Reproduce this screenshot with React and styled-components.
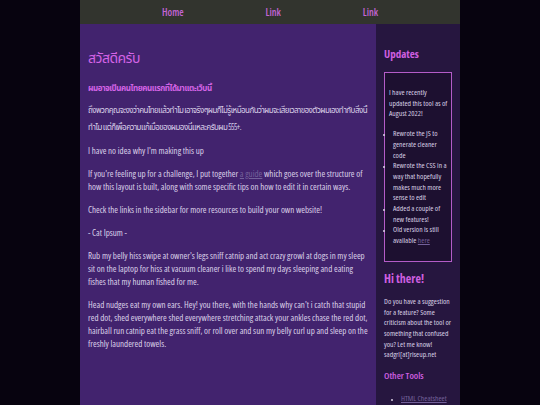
import React from "react";
import styled, { createGlobalStyle } from "styled-components";

const Global = createGlobalStyle`
  html, body { margin: 0; padding: 0; background: #07030f; }
  body { font-family: "Open Sans", "Noto Sans Thai", sans-serif; font-stretch: 75%; }
  * { box-sizing: border-box; }
`;

const Page = styled.div`
  width: 380px;
  margin: 0 auto;
  min-height: 405px;
  display: flex;
  flex-direction: column;
`;

const Header = styled.header`
  height: 24px;
  background: #32342e;
  display: flex;
  justify-content: space-evenly;
  align-items: center;
`;

const NavLink = styled.a`
  color: #c465d6;
  font-size: 10px;
  font-weight: 600;
  text-decoration: none;
`;

const Body = styled.div`
  flex: 1;
  display: grid;
  grid-template-columns: 296px 84px;
`;

const Main = styled.main`
  background: #42236e;
  padding: 25px 8px 0 8px;
  color: #dad0e8;
`;

const H1 = styled.h1`
  margin: 0 0 15px;
  font-size: 14px;
  line-height: 18px;
  letter-spacing: -0.5px;
  font-weight: normal;
  color: #d463e6;
`;

const H2 = styled.h2`
  margin: 0 0 7px;
  font-size: 8px;
  line-height: 12px;
  letter-spacing: -0.4px;
  font-weight: bold;
  color: #d463e6;
`;

const P = styled.p`
  margin: 0 0 10px;
  font-size: 8.98px;
  line-height: 13px;
`;

const ThaiP = styled(P)`
  margin-bottom: 9px;
  font-size: 8px;
  line-height: 17px;
  letter-spacing: -0.55px;
`;

const TextLink = styled.a`
  color: #73609a;
  text-decoration: underline;
`;

const Side = styled.aside`
  background: #26163f;
  padding: 23px 8px 0 8px;
  color: #d8cfe4;
`;

const SideTitle = styled.h3`
  margin: 0 0 ${(p) => p.$mb ?? 10}px;
  font-size: ${(p) => p.$size ?? 11}px;
  line-height: ${(p) => p.$lh ?? 14}px;
  font-weight: ${(p) => p.$weight ?? 700};
  color: #cf5fe0;
`;

const Box = styled.div`
  border: 1px solid #b45cc8;
  background: #1d1030;
  padding: 14px 3px 15px 4px;
  margin-bottom: 9px;
`;

const SideP = styled.p`
  margin: 0 0 ${(p) => p.$mb ?? 9}px;
  font-size: 7.6px;
  line-height: 10.7px;
`;

const List = styled.ul`
  margin: 0;
  padding-left: ${(p) => p.$pl ?? 4}px;
  font-size: 7.6px;
  line-height: 10.7px;

  li::marker {
    font-size: 5px;
  }
`;

export default function App() {
  return (
    <>
      <Global />
      <Page>
        <Header>
          <NavLink href="#">Home</NavLink>
          <NavLink href="#">Link</NavLink>
          <NavLink href="#">Link</NavLink>
        </Header>
        <Body>
          <Main>
            <H1>สวัสดีครับ</H1>
            <H2>ผมอาจเป็นคนไทยคนแรกที่ได้มาเเตะเว็บนี้</H2>
            <ThaiP>
              ถึงพวกคุณจะงงว่าคนไทยแล้วทำไม เอาจริงๆผมก็ไม่รู้เหมือนกันว่าผมจะเสียเวลาของตัวผมเองทำกับสิ่งนี้ทำไม แต่ก็เพื่อความแก้เบื่อของผมองนี่แหละครับผม 555+.
            </ThaiP>
            <P>I have no idea why I'm making this up</P>
            <P>
              If you're feeling up for a challenge, I put together <TextLink href="#">a guide</TextLink> which goes over the structure of how this layout is built, along with some specific tips on how to edit it in certain ways.
            </P>
            <P>Check the links in the sidebar for more resources to build your own website!</P>
            <P>- Cat Ipsum -</P>
            <P>
              Rub my belly hiss swipe at owner's legs sniff catnip and act crazy growl at dogs in my sleep sit on the laptop for hiss at vacuum cleaner i like to spend my days sleeping and eating fishes that my human fished for me.
            </P>
            <P>
              Head nudges eat my own ears. Hey! you there, with the hands why can't i catch that stupid red dot, shed everywhere shed everywhere stretching attack your ankles chase the red dot, hairball run catnip eat the grass sniff, or roll over and sun my belly curl up and sleep on the freshly laundered towels.
            </P>
          </Main>
          <Side>
            <SideTitle $mb={11}>Updates</SideTitle>
            <Box>
              <SideP>I have recently updated this tool as of August 2022!</SideP>
              <List>
                <li>Rewrote the JS to generate cleaner code</li>
                <li>Rewrote the CSS in a way that hopefully makes much more sense to edit</li>
                <li>Added a couple of new features!</li>
                <li>Old version is still available <TextLink href="#">here</TextLink></li>
              </List>
            </Box>
            <SideTitle $size={12} $lh={15} $mb={10}>Hi there!</SideTitle>
            <SideP $mb={10}>
              Do you have a suggestion for a feature? Some criticism about the tool or something that confused you? Let me know! sadgrl[at]riseup.net
            </SideP>
            <SideTitle $size={9.5} $lh={12} $mb={11} $weight={600}>Other Tools</SideTitle>
            <List $pl={17}>
              <li><TextLink href="#">HTML Cheatsheet</TextLink></li>
            </List>
          </Side>
        </Body>
      </Page>
    </>
  );
}
